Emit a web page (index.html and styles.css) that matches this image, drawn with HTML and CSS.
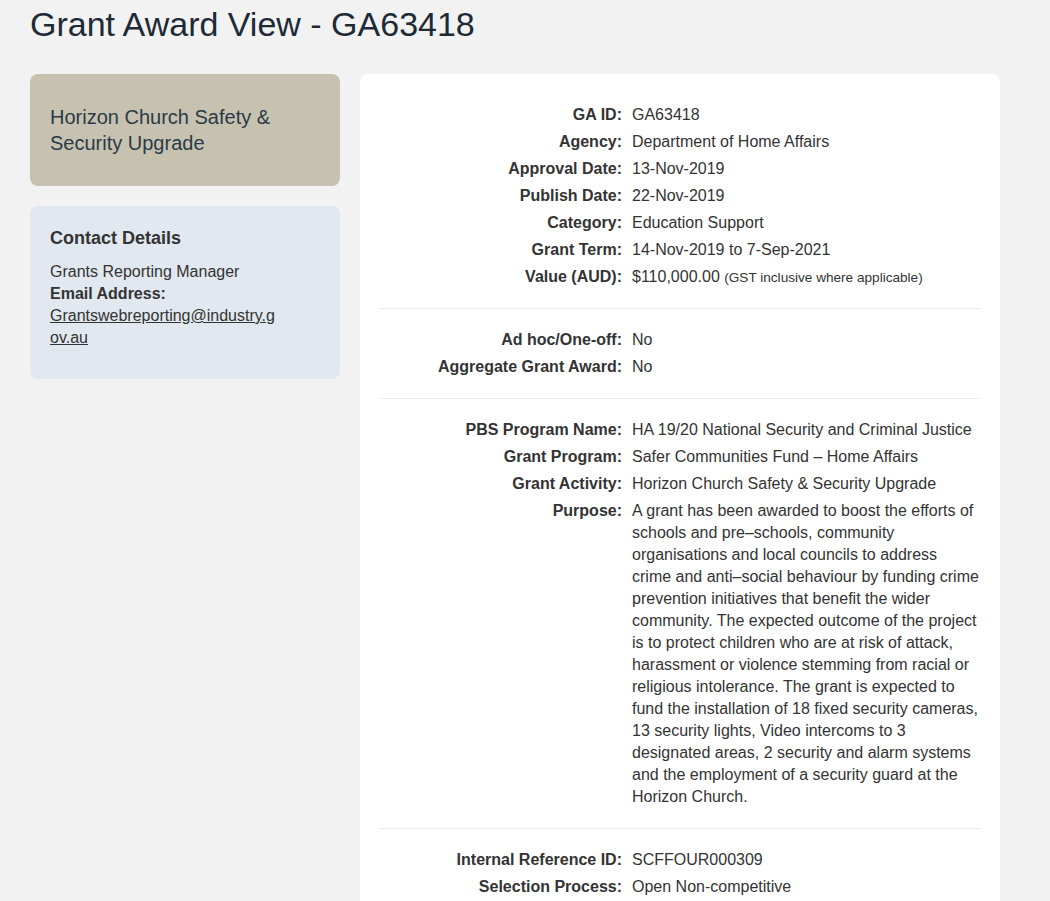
FILE: index.html
```html
<!DOCTYPE html>
<html lang="en">
<head>
<meta charset="utf-8">
<title>Grant Award View - GA63418</title>
<link rel="stylesheet" href="styles.css">
</head>
<body>
<div class="page">
  <h1 class="page-title">Grant Award View - GA63418</h1>
  <div class="layout">
    <aside class="sidebar">
      <div class="title-box">Horizon Church Safety &amp; Security Upgrade</div>
      <div class="contact-box">
        <h2 class="contact-heading">Contact Details</h2>
        <p class="contact-text">Grants Reporting Manager<br><strong>Email Address:</strong><br><a class="contact-link" href="#">Grantswebreporting@industry.gov.au</a></p>
      </div>
    </aside>
    <main class="card">
      <section class="section">
        <div class="row"><div class="label">GA ID:</div><div class="value">GA63418</div></div>
        <div class="row"><div class="label">Agency:</div><div class="value">Department of Home Affairs</div></div>
        <div class="row"><div class="label">Approval Date:</div><div class="value">13-Nov-2019</div></div>
        <div class="row"><div class="label">Publish Date:</div><div class="value">22-Nov-2019</div></div>
        <div class="row"><div class="label">Category:</div><div class="value">Education Support</div></div>
        <div class="row"><div class="label">Grant Term:</div><div class="value">14-Nov-2019 to 7-Sep-2021</div></div>
        <div class="row"><div class="label">Value (AUD):</div><div class="value">$110,000.00 <small class="note">(GST inclusive where applicable)</small></div></div>
      </section>
      <section class="section">
        <div class="row"><div class="label">Ad hoc/One-off:</div><div class="value">No</div></div>
        <div class="row"><div class="label">Aggregate Grant Award:</div><div class="value">No</div></div>
      </section>
      <section class="section">
        <div class="row"><div class="label">PBS Program Name:</div><div class="value">HA 19/20 National Security and Criminal Justice</div></div>
        <div class="row"><div class="label">Grant Program:</div><div class="value">Safer Communities Fund – Home Affairs</div></div>
        <div class="row"><div class="label">Grant Activity:</div><div class="value">Horizon Church Safety &amp; Security Upgrade</div></div>
        <div class="row"><div class="label">Purpose:</div><div class="value">A grant has been awarded to boost the efforts of schools and pre–schools, community organisations and local councils to address crime and anti–social behaviour by funding crime prevention initiatives that benefit the wider community. The expected outcome of the project is to protect children who are at risk of attack, harassment or violence stemming from racial or religious intolerance. The grant is expected to fund the installation of 18 fixed security cameras, 13 security lights, Video intercoms to 3 designated areas, 2 security and alarm systems and the employment of a security guard at the Horizon Church.</div></div>
      </section>
      <section class="section">
        <div class="row"><div class="label">Internal Reference ID:</div><div class="value">SCFFOUR000309</div></div>
        <div class="row"><div class="label">Selection Process:</div><div class="value">Open Non-competitive</div></div>
      </section>
    </main>
  </div>
</div>
</body>
</html>
```
FILE: styles.css
```css
html, body {
  margin: 0;
  padding: 0;
}
body {
  background: #f2f2f2;
  font-family: "Liberation Sans", Arial, sans-serif;
  color: #333;
  font-size: 16px;
  line-height: 22px;
}
.page {
  padding: 4px 30px 0 30px;
}
.page-title {
  margin: 0 0 30px 0;
  font-size: 34px;
  line-height: 40px;
  font-weight: normal;
  color: #1e2b37;
}
.layout {
  display: grid;
  grid-template-columns: 310px 640px;
  column-gap: 20px;
  align-items: start;
}
.sidebar {
  display: flex;
  flex-direction: column;
  gap: 20px;
}
.title-box {
  background: #c7c2b0;
  border-radius: 8px;
  padding: 30px 20px;
  font-size: 20px;
  line-height: 26px;
  color: #2b3a47;
}
.contact-box {
  background: #e1e8ef;
  border-radius: 8px;
  padding: 20px 62px 30px 20px;
}
.contact-heading {
  margin: 0 0 11px 0;
  font-size: 18px;
  line-height: 24px;
  font-weight: bold;
  color: #333;
}
.contact-text {
  margin: 0;
  word-break: break-all;
}
.contact-link {
  color: #333;
  text-decoration: underline;
}
.card {
  background: #fff;
  border-radius: 8px;
  padding: 10px 20px 0 20px;
  min-height: 900px;
}
.section {
  padding: 20px 0 15px 0;
  border-bottom: 1px solid #eaeaea;
}
.section:last-child {
  border-bottom: none;
}
.row {
  display: grid;
  grid-template-columns: 242px 1fr;
  column-gap: 10px;
  margin-bottom: 5px;
}
.label {
  text-align: right;
  font-weight: bold;
}
.note {
  font-size: 13.6px;
  line-height: 1;
}
```
